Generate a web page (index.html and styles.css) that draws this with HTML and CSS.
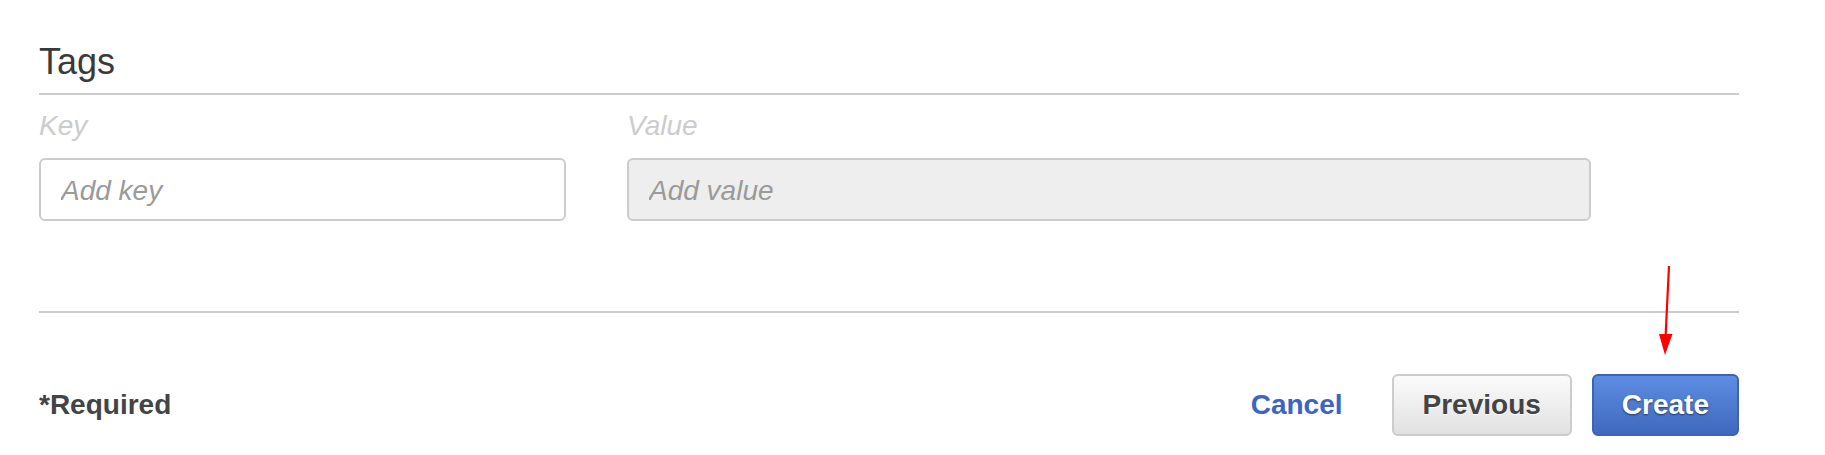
FILE: index.html
```html
<!DOCTYPE html>
<html>
<head>
<meta charset="utf-8">
<link rel="stylesheet" href="styles.css">
</head>
<body>
<div class="page">
  <section class="tags">
    <h2 class="title">Tags</h2>
    <div class="tag-grid">
      <label class="field-label">Key</label>
      <label class="field-label">Value</label>
      <input class="field" type="text" placeholder="Add key">
      <input class="field field-disabled" type="text" placeholder="Add value" disabled>
    </div>
  </section>
  <footer class="footer">
    <span class="required">*Required</span>
    <div class="actions">
      <a class="cancel">Cancel</a>
      <button class="btn btn-secondary">Previous</button>
      <button class="btn btn-primary">Create</button>
    </div>
  </footer>
  <svg class="annot-arrow" width="24" height="100" viewBox="0 0 24 100">
    <line x1="14" y1="4" x2="10.5" y2="76" stroke="#ff0000" stroke-width="2.2"/>
    <polygon points="4,72 17.5,72 10,93" fill="#ff0000"/>
  </svg>
</div>
</body>
</html>
```

FILE: styles.css
```css
html, body {
  margin: 0;
  padding: 0;
  background: #ffffff;
}

.page {
  position: relative;
  width: 1700px;
  margin-left: 39px;
  padding-top: 42px;
  font-family: "Liberation Sans", Arial, sans-serif;
}

.title {
  margin: 0;
  font-size: 36px;
  line-height: 40px;
  font-weight: normal;
  color: #3a3a3a;
  padding-bottom: 11px;
  border-bottom: 2px solid #cccccc;
}

.tag-grid {
  display: grid;
  grid-template-columns: 527px 964px;
  column-gap: 61px;
  row-gap: 16px;
  padding-top: 15px;
  padding-bottom: 90px;
  border-bottom: 2px solid #cccccc;
}

.field-label {
  font-size: 28px;
  line-height: 32px;
  font-style: italic;
  color: #cccccc;
}

.field {
  box-sizing: border-box;
  height: 63px;
  margin: 0;
  padding: 2px 20px 0;
  border: 2px solid #cccccc;
  border-radius: 6px;
  background: #ffffff;
  font-family: "Liberation Sans", Arial, sans-serif;
  font-size: 28px;
  font-style: italic;
  color: #444444;
  outline: none;
}

.field::placeholder {
  color: #9a9a9a;
  opacity: 1;
}

.field-disabled {
  background: #eeeeee;
}

.footer {
  display: flex;
  align-items: center;
  justify-content: space-between;
  padding-top: 61px;
}

.required {
  font-size: 28px;
  line-height: 32px;
  font-weight: bold;
  color: #444444;
}

.actions {
  display: flex;
  align-items: center;
}

.cancel {
  font-size: 28px;
  line-height: 32px;
  font-weight: bold;
  color: #3d64c3;
  margin-right: 49px;
  cursor: pointer;
}

.btn {
  box-sizing: border-box;
  height: 62px;
  margin: 0;
  border-radius: 6px;
  font-family: "Liberation Sans", Arial, sans-serif;
  font-size: 28px;
  font-weight: bold;
  line-height: 32px;
  cursor: pointer;
}

.btn-secondary {
  padding: 0 29px;
  border: 2px solid #cccccc;
  background: linear-gradient(to bottom, #fbfbfb, #e1e1e1);
  color: #444444;
  text-shadow: 0 1px 0 #ffffff;
  margin-right: 20px;
}

.btn-primary {
  padding: 0 28px;
  border: 2px solid #3f63b4;
  background: linear-gradient(to bottom, #5d8de3, #3f69bd);
  color: #ffffff;
  text-shadow: 0 1px 2px rgba(0, 0, 0, 0.55);
}

.annot-arrow {
  position: absolute;
  left: 1616px;
  top: 262px;
}
```
